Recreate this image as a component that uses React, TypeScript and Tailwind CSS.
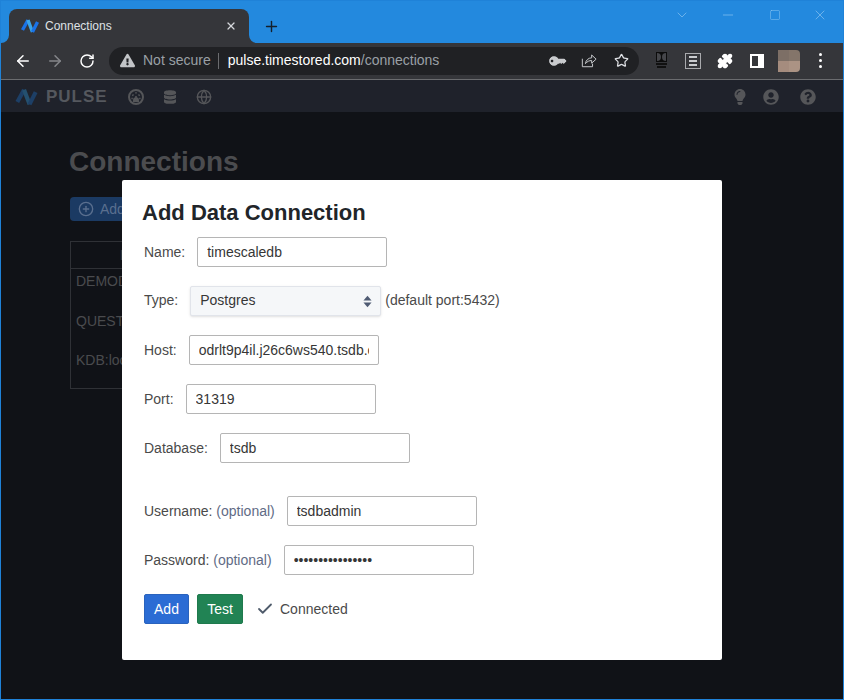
import { ArrowLeft, ArrowRight, RotateCw, Star, CirclePlus, Globe, Check, X, Plus, Minus, ChevronDown, Square, Puzzle } from 'lucide-react'
import { FaDatabase, FaKey, FaLightbulb, FaQuestionCircle, FaUserCircle, FaExclamationTriangle } from 'react-icons/fa'

const FONT = "font-['Liberation_Sans',Arial,sans-serif]"

function Logo({ className, dim }: { className: string; dim?: boolean }) {
  return (
    <svg viewBox="0 0 18 18" className={className} fill="none" strokeWidth="3.4" strokeLinejoin="round">
      <path d="M1.5 13 L7 3" stroke={dim ? '#1d3f66' : '#1a73e8'} />
      <path d="M7 3 L11.5 15" stroke={dim ? '#24506f' : '#3ba4e8'} />
      <path d="M11.5 15 L16.5 5" stroke={dim ? '#1d3f66' : '#1a73e8'} />
    </svg>
  )
}

function Tab() {
  return (
    <div className="relative ml-2 flex h-[34px] w-[240px] items-center rounded-t-lg bg-[#35363a] pl-3 pr-[12px]">
      <svg viewBox="0 0 8 8" className="absolute bottom-0 -left-2 h-2 w-2">
        <path d="M8 0 V8 H0 A8 8 0 0 0 8 0Z" fill="#35363a" />
      </svg>
      <svg viewBox="0 0 8 8" className="absolute -right-2 bottom-0 h-2 w-2">
        <path d="M0 0 V8 H8 A8 8 0 0 1 0 0Z" fill="#35363a" />
      </svg>
      <Logo className="h-[18px] w-[18px] shrink-0" />
      <span className="ml-[6px] flex-1 text-xs text-[#dfe1e5]">Connections</span>
      <X className="h-3 w-3 text-[#d5d7db]" strokeWidth={2.4} />
    </div>
  )
}

function TitleBar() {
  return (
    <div className="flex h-[42px] items-end bg-[#2389de]">
      <Tab />
      <Plus className="mb-[8px] ml-[14px] h-[17px] w-[17px] text-[#15202b]" strokeWidth={2} />
      <div className="ml-auto mb-[20px] flex items-center text-[#8fc6f2]">
        <ChevronDown className="mr-[30px] h-[16px] w-[16px]" strokeWidth={1} />
        <Minus className="mr-[33px] h-[16px] w-[16px]" strokeWidth={1} />
        <Square className="mr-[31px] h-[12px] w-[12px]" strokeWidth={1} />
        <X className="mr-[15px] h-[16px] w-[16px]" strokeWidth={1} />
      </div>
    </div>
  )
}

function Toolbar() {
  return (
    <div className="flex h-[37px] items-center border-b border-[#6b6c6f] bg-[#35363a] pb-[1px]">
      <ArrowLeft className="ml-[13px] h-[18px] w-[18px] text-white" strokeWidth={2} />
      <ArrowRight className="ml-[14px] h-[18px] w-[18px] text-[#85868a]" strokeWidth={2} />
      <RotateCw className="ml-[15px] h-[16px] w-[16px] text-white" strokeWidth={2.2} />
      <div className="ml-[14px] flex h-7 w-[530px] items-center rounded-full bg-[#202124] pl-[11px] pr-[10px]">
        <FaExclamationTriangle className="h-[15px] w-[15px] text-[#c2c4c7]" />
        <span className="ml-[8px] text-[14px] text-[#9aa0a6]">Not secure</span>
        <span className="ml-[7px] mr-[9px] h-4 w-px bg-[#6b6c6f]" />
        <span className="text-[14px] text-white">pulse.timestored.com</span>
        <span className="text-[14px] text-[#9aa0a6]">/connections</span>
        <FaKey className="ml-auto h-[14px] w-[14px] -scale-x-100 -rotate-45 text-[#c9cbce]" />
        <svg viewBox="0 0 18 16" className="ml-[17px] h-[15px] w-[16px]" fill="none" stroke="#c9cbce" strokeWidth="1.1">
          <path d="M1.5 6 V15 H13 V11.5" />
          <path d="M5 11.5 C5.5 7.5 8.5 5 12 5 V1.8 L17 6.5 L12 11 V8 C9.5 8 7 9 5 11.5Z" />
        </svg>
        <Star className="ml-[17px] h-[15px] w-[15px] text-[#dfe1e5]" strokeWidth={2} />
      </div>
      <div className="ml-[16px] flex h-[18px] w-3 flex-col items-center">
        <div className="flex h-[10px] w-[11px] gap-px bg-[#0c0c0c] p-px">
          <span className="flex-1 rounded-r-sm bg-[#45464a]" />
          <span className="flex-1 rounded-l-sm bg-[#45464a]" />
        </div>
        <span className="mt-px h-[2px] w-[11px] bg-[#111]" />
        <span className="mt-px h-[2px] w-[9px] bg-[#111]" />
      </div>
      <div className="ml-[18px] flex h-4 w-4 flex-col items-center justify-center gap-[2px] border border-[#a9aaad]">
        <span className="h-[2px] w-[8px] bg-[#c9cbce]" />
        <span className="h-[2px] w-[8px] bg-[#c9cbce]" />
        <span className="h-[2px] w-[8px] bg-[#c9cbce]" />
      </div>
      <Puzzle className="ml-[16px] h-[16px] w-[16px] fill-white text-white" strokeWidth={2} />
      <div className="ml-[17px] flex h-[14px] w-[14px] bg-white p-[2px] pr-[6px]">
        <span className="flex-1 bg-[#35363a]" />
      </div>
      <div className="ml-[14px] grid h-[22px] w-[22px] grid-cols-2 overflow-hidden rounded-r-[4px]">
        <span className="bg-[#7d6f66]" />
        <span className="bg-[#84756a]" />
        <span className="bg-[#a58c7e]" />
        <span className="bg-[#ab9384]" />
      </div>
      <div className="ml-[19px] flex flex-col gap-[3px]">
        <span className="h-[3px] w-[3px] rounded-full bg-white" />
        <span className="h-[3px] w-[3px] rounded-full bg-white" />
        <span className="h-[3px] w-[3px] rounded-full bg-white" />
      </div>
    </div>
  )
}

function GaugeIcon() {
  return (
    <svg viewBox="0 0 16 16" className="ml-[20px] h-4 w-4" fill="none" stroke="currentColor">
      <circle cx="8" cy="8" r="7" strokeWidth="2" />
      <path d="M3.4 9.5 h1.4 M4.4 5.6 l1 1 M8 3.2 v1.4 M11.6 5.6 l-1 1 M11.2 9.5 h1.4" strokeWidth="1.7" />
      <path d="M8 12 L8 7" strokeWidth="1.6" />
      <path d="M5 13 h6 v-1.8 a3 3 0 0 0 -6 0Z" fill="currentColor" stroke="none" />
    </svg>
  )
}

function NavBar() {
  return (
    <div className="flex h-[32px] items-center bg-[#1f222b] pt-[2px] text-[#555659]">
      <Logo dim className="ml-[11px] h-[22px] w-[29px]" />
      <span className="ml-[5px] text-[17px] font-bold tracking-[1px] text-[#55585e]">PULSE</span>
      <GaugeIcon />
      <FaDatabase className="ml-[20px] h-4 w-[12px]" />
      <Globe className="ml-[20px] h-4 w-4" strokeWidth={2} />
      <FaLightbulb className="ml-auto h-4 w-[12px]" />
      <FaUserCircle className="ml-[17px] h-4 w-4" />
      <FaQuestionCircle className="ml-[21px] mr-[27px] h-4 w-4" />
    </div>
  )
}

function Background() {
  return (
    <div className="h-[587px] bg-[#101217] pl-[69px] pt-[35px]">
      <h1 className="-ml-px text-[28px] font-bold leading-[30px] text-[#4b4c4f]">Connections</h1>
      <div className="mt-5 flex h-6 w-[120px] items-center rounded-sm bg-[#1b3a63] pl-[8px] text-[14px] text-[#5a6f8f]">
        <CirclePlus className="h-4 w-4" />
        <span className="ml-[6px]">Add</span>
      </div>
      <div className="mt-5 h-[148px] w-[200px] border border-[#2f3136] text-[14px] text-[#4a4b4e]">
        <div className="h-[27px] border-b border-[#2f3136] pl-[49px] pt-[3px] font-bold text-[#3a3b3e]">Name</div>
        <div className="h-[40px] pl-[5px] pt-[2px]">DEMODB</div>
        <div className="h-[40px] pl-[5px] pt-[2px]">QUESTDB</div>
        <div className="h-[40px] pl-[5px] pt-px">KDB:localhost</div>
      </div>
    </div>
  )
}

function Field({ label, hint, value, width = 'w-[190px]', type = 'text', gap, spacing = 'mb-[19px]' }: {
  label: string
  hint?: string
  value: string
  width?: string
  type?: string
  gap: string
  spacing?: string
}) {
  return (
    <div className={`flex h-[30px] items-center ${spacing}`}>
      <label className="text-[14px] text-[#4a4a4a]">
        {label}
        {hint && <span className="text-[#5f6b85]"> {hint}</span>}
      </label>
      <input
        readOnly
        type={type}
        value={value}
        className={`${gap} ${width} h-[30px] rounded-[2px] border border-[#b5b5b5] bg-white px-[9px] text-[14px] text-[#363636] outline-none`}
      />
    </div>
  )
}

function ConnectionModal() {
  return (
    <div className="absolute left-[121px] top-[179px] h-[480px] w-[600px] rounded-[2px] bg-white pl-5 pt-[20px]">
      <h2 className="mb-[11px] text-[22px] font-bold leading-[26px] text-[#212529]">Add Data Connection</h2>
      <div className="pl-[2px]">
        <Field label="Name:" value="timescaledb" gap="ml-3" />
        <div className="mb-[19px] flex h-[30px] items-center">
          <label className="pb-[2px] text-[14px] text-[#4a4a4a]">Type:</label>
          <div className="ml-3 flex h-[30px] w-[191px] items-center justify-between rounded-[2px] border border-[#e1e4ea] bg-[#f5f7f9] pb-[2px] pl-[9px] pr-[8px] text-[14px] text-[#363636] shadow-sm">
            Postgres
            <svg viewBox="0 0 10 14" className="mt-[2px] h-[13px] w-[9px]" fill="#4f5b73">
              <path d="M5 0.5 L9.5 5.8 H0.5Z" />
              <path d="M5 13.5 L9.5 8.2 H0.5Z" />
            </svg>
          </div>
          <span className="ml-[4px] pb-[2px] text-[14px] text-[#4a4a4a]">(default port:5432)</span>
        </div>
        <Field label="Host:" value="odrlt9p4il.j26c6ws540.tsdb.c" gap="ml-3" />
        <Field label="Port:" value="31319" gap="ml-[12px]" />
        <Field label="Database:" value="tsdb" gap="ml-3" spacing="mb-[33px]" />
        <Field label="Username:" hint="(optional)" value="tsdbadmin" gap="ml-3" />
        <Field label="Password:" hint="(optional)" value="••••••••••••••••" type="password" gap="ml-3" />
        <div className="flex h-[30px] items-center text-[14px]">
          <button className="h-[30px] w-[45px] rounded-[2px] border border-[#2a63bd] bg-[#2b6cd4] text-white">Add</button>
          <button className="ml-2 h-[30px] w-[46px] rounded-[2px] border border-[#1f7a4d] bg-[#218354] text-white">Test</button>
          <Check className="ml-[13px] h-[18px] w-[18px] text-[#4f5b6b]" strokeWidth={2.4} />
          <span className="ml-[6px] text-[#4a4a4a]">Connected</span>
        </div>
      </div>
    </div>
  )
}

export default function App() {
  return (
    <div className={`relative h-[700px] w-[844px] overflow-hidden border border-[#1f82d8] ${FONT}`}>
      <TitleBar />
      <Toolbar />
      <NavBar />
      <Background />
      <ConnectionModal />
    </div>
  )
}
